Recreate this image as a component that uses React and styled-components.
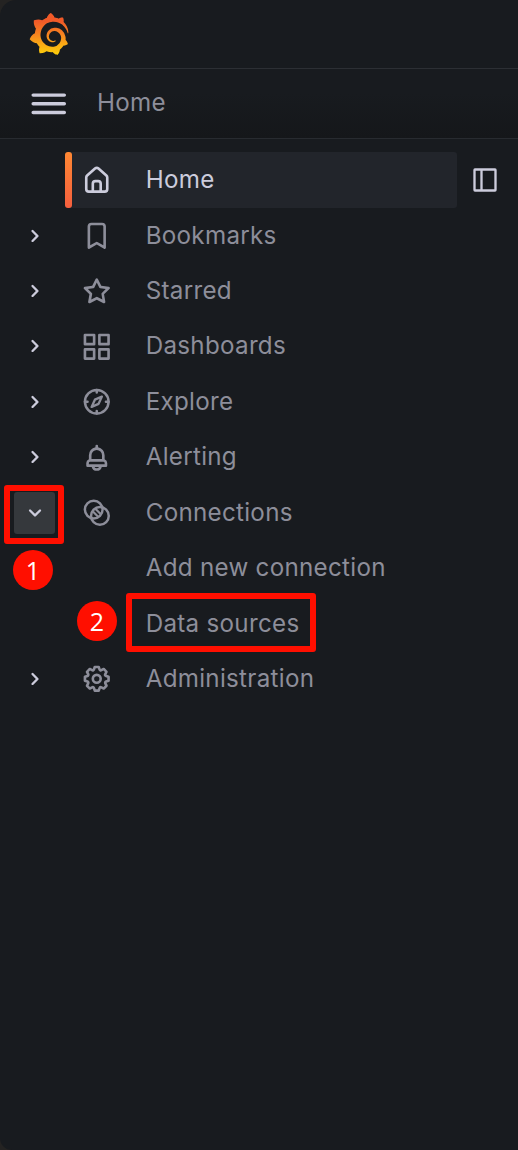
import React from 'react';
import styled, { createGlobalStyle, css } from 'styled-components';
import { SiGrafana } from 'react-icons/si';

const GlobalStyle = createGlobalStyle`
  *, *::before, *::after { box-sizing: border-box; }
  body {
    margin: 0;
    background: #242322;
    font-family: Inter, "Liberation Sans", sans-serif;
  }
  button { font: inherit; border: 0; padding: 0; background: none; color: inherit; }
`;

const Page = styled.div`
  position: relative;
  width: 518px;
  height: 1150px;
  overflow: hidden;
  background: #181b1f;
  border-radius: 16px 0 0 12px;
`;

const TopBar = styled.header`
  display: flex;
  align-items: center;
  height: 69px;
  padding-left: 28px;
  border-bottom: 1px solid #2c2f34;
`;

const Logo = styled(SiGrafana)`
  display: block;
  width: 42px;
  height: 42px;
  path { fill: url(#flame); }
`;

const CrumbBar = styled.div`
  display: flex;
  align-items: center;
  gap: 27.5px;
  height: 70px;
  padding-left: 28px;
  background: linear-gradient(to bottom, #181b1f 35%, #15171a 100%);
  border-bottom: 1px solid #282b30;
`;

const MenuButton = styled.button`
  display: flex;
  color: #ccccdc;
`;

const Crumb = styled.span`
  font-size: 24.2px;
  line-height: 36px;
  letter-spacing: 0.26px;
  padding-bottom: 2px;
  color: #8d8e9a;
`;

const Glyph = styled.svg`
  display: block;
  flex: none;
  width: ${(p) => p.$size}px;
  height: ${(p) => p.$size}px;
  fill: currentColor;
`;

const NavList = styled.ul`
  list-style: none;
  margin: 0;
  padding: 13.45px 0 0 14px;
`;

const NavRow = styled.li`
  display: flex;
  align-items: center;
  height: 55.45px;
`;

const Toggle = styled.button`
  display: flex;
  align-items: center;
  justify-content: center;
  flex: none;
  width: 41px;
  height: 42px;
  margin-right: 11px;
  border-radius: 3px;
  color: #ccccdc;
  background: ${(p) => (p.$open ? '#35383c' : 'transparent')};
`;

const NavLink = styled.a`
  position: relative;
  display: flex;
  align-items: center;
  gap: 32.8px;
  width: 391px;
  height: 56px;
  padding-left: 15.4px;
  border-radius: 3px;
  color: #8d8e9a;
  ${(p) =>
    p.$active &&
    css`
      color: #ccccdc;
      background: #22252b;
      &::before {
        content: '';
        position: absolute;
        left: -0.6px;
        top: 0;
        bottom: 0;
        width: 7px;
        border-radius: 3px;
        background: linear-gradient(#ff8833, #f55f3e);
      }
    `}
`;

const Label = styled.span`
  font-size: 24.2px;
  line-height: 36px;
  letter-spacing: 0.28px;
  white-space: nowrap;
`;

const IconGap = styled.span`
  flex: none;
  width: 31.5px;
`;

const DockButton = styled.button`
  display: flex;
  margin-left: 14px;
  color: #ccccdc;
`;

const Highlight = styled.div`
  position: absolute;
  left: ${(p) => p.$x}px;
  top: ${(p) => p.$y}px;
  width: ${(p) => p.$w}px;
  height: 59px;
  border: 6px solid #ff0f00;
  border-radius: 3px;
`;

const Step = styled.div`
  position: absolute;
  left: ${(p) => p.$x}px;
  top: ${(p) => p.$y}px;
  display: flex;
  align-items: center;
  justify-content: center;
  width: 40px;
  height: 40px;
  border-radius: 50%;
  background: #ff0f00;
  color: #fff;
  font: 25px/40px "Open Sans", "Noto Sans", sans-serif;
`;

const paths = {
  right: 'M14.83,11.29,10.59,7.05a1,1,0,0,0-1.42,0,1,1,0,0,0,0,1.41L12.71,12,9.17,15.54a1,1,0,0,0,0,1.41,1,1,0,0,0,.71.29,1,1,0,0,0,.71-.29l4.24-4.24A1,1,0,0,0,14.83,11.29Z',
  down: 'M17,9.17a1,1,0,0,0-1.41,0L12,12.71,8.46,9.17a1,1,0,0,0-1.41,0,1,1,0,0,0,0,1.42l4.24,4.24a1,1,0,0,0,1.42,0L17,10.59A1,1,0,0,0,17,9.17Z',
  bars: 'M3,8H21a1,1,0,0,0,0-2H3A1,1,0,0,0,3,8ZM21,11H3a1,1,0,0,0,0,2H21a1,1,0,0,0,0-2ZM21,16H3a1,1,0,0,0,0,2H21a1,1,0,0,0,0-2Z',
  home: 'M20,8h0L14,2.74a3,3,0,0,0-4,0L4,8a3,3,0,0,0-1,2.26V19a3,3,0,0,0,3,3H18a3,3,0,0,0,3-3V10.25A3,3,0,0,0,20,8ZM14,20H10V15a1,1,0,0,1,1-1h2a1,1,0,0,1,1,1Zm5-1a1,1,0,0,1-1,1H16V15a3,3,0,0,0-3-3H11a3,3,0,0,0-3,3v5H6a1,1,0,0,1-1-1V10.25a1,1,0,0,1,.34-.75l6-5.25a1,1,0,0,1,1.32,0l6,5.25a1,1,0,0,1,.34.75Z',
  bookmark: 'M16,2H8A3,3,0,0,0,5,5V21a1,1,0,0,0,.5.87,1,1,0,0,0,1,0L12,18.69l5.5,3.18A1,1,0,0,0,18,22a1,1,0,0,0,.5-.13A1,1,0,0,0,19,21V5A3,3,0,0,0,16,2Zm1,17.27-4.5-2.6a1,1,0,0,0-1,0L7,19.27V5A1,1,0,0,1,8,4h8a1,1,0,0,1,1,1Z',
  star: 'M22,9.67A1,1,0,0,0,21.14,9l-5.69-.83L12.9,3a1,1,0,0,0-1.8,0L8.55,8.16,2.86,9a1,1,0,0,0-.81.68,1,1,0,0,0,.25,1l4.13,4-1,5.68A1,1,0,0,0,6.9,21.44L12,18.77l5.1,2.67a.93.93,0,0,0,.46.12,1,1,0,0,0,.59-.19,1,1,0,0,0,.4-1l-1-5.68,4.13-4A1,1,0,0,0,22,9.67Zm-6.15,4a1,1,0,0,0-.29.88l.72,4.2-3.76-2a1.06,1.06,0,0,0-.94,0l-3.76,2,.72-4.2a1,1,0,0,0-.29-.88l-3-3,4.21-.61a1,1,0,0,0,.76-.55L12,5.7l1.88,3.82a1,1,0,0,0,.76.55l4.21.61Z',
  apps: 'M10,13H3a1,1,0,0,0-1,1v7a1,1,0,0,0,1,1h7a1,1,0,0,0,1-1V14A1,1,0,0,0,10,13ZM9,20H4V15H9ZM21,2H14a1,1,0,0,0-1,1v7a1,1,0,0,0,1,1h7a1,1,0,0,0,1-1V3A1,1,0,0,0,21,2ZM20,9H15V4h5Zm1,4H14a1,1,0,0,0-1,1v7a1,1,0,0,0,1,1h7a1,1,0,0,0,1-1V14A1,1,0,0,0,21,13Zm-1,7H15V15h5ZM10,2H3A1,1,0,0,0,2,3v7a1,1,0,0,0,1,1h7a1,1,0,0,0,1-1V3A1,1,0,0,0,10,2ZM9,9H4V4H9Z',
  bell: 'M18,13.18V10a6,6,0,0,0-5-5.91V3a1,1,0,0,0-2,0V4.09A6,6,0,0,0,6,10v3.18A3,3,0,0,0,4,16v2a1,1,0,0,0,1,1H8.14a4,4,0,0,0,7.72,0H19a1,1,0,0,0,1-1V16A3,3,0,0,0,18,13.18ZM8,10a4,4,0,0,1,8,0v3H8Zm4,10a2,2,0,0,1-1.72-1h3.44A2,2,0,0,1,12,20Zm6-3H6V16a1,1,0,0,1,1-1H17a1,1,0,0,1,1,1Z',
  cog: 'M21.32,9.55l-1.89-.63.89-1.78A1,1,0,0,0,20.13,6L18,3.87a1,1,0,0,0-1.15-.19l-1.78.89-.63-1.89A1,1,0,0,0,13.5,2h-3a1,1,0,0,0-.95.68L8.92,4.57,7.14,3.68A1,1,0,0,0,6,3.87L3.87,6a1,1,0,0,0-.19,1.15l.89,1.78-1.89.63A1,1,0,0,0,2,10.5v3a1,1,0,0,0,.68.95l1.89.63-.89,1.78A1,1,0,0,0,3.87,18L6,20.13a1,1,0,0,0,1.15.19l1.78-.89.63,1.89a1,1,0,0,0,.95.68h3a1,1,0,0,0,.95-.68l.63-1.89,1.78.89A1,1,0,0,0,18,20.13L20.13,18a1,1,0,0,0,.19-1.15l-.89-1.78,1.89-.63A1,1,0,0,0,22,13.5v-3A1,1,0,0,0,21.32,9.55ZM20,12.78l-1.2.4A2,2,0,0,0,17.64,16l.57,1.14-1.1,1.1L16,17.64a2,2,0,0,0-2.79,1.16l-.4,1.2H11.22l-.4-1.2A2,2,0,0,0,8,17.64l-1.14.57-1.1-1.1L6.36,16A2,2,0,0,0,5.2,13.18L4,12.78V11.22l1.2-.4A2,2,0,0,0,6.36,8L5.79,6.89l1.1-1.1L8,6.36A2,2,0,0,0,10.82,5.2l.4-1.2h1.56l.4,1.2A2,2,0,0,0,16,6.36l1.14-.57,1.1,1.1L17.64,8a2,2,0,0,0,1.16,2.79l1.2.4ZM12,8a4,4,0,1,0,4,4A4,4,0,0,0,12,8Zm0,6a2,2,0,1,1,2-2A2,2,0,0,1,12,14Z',
};

const strokes = {
  compass: (
    <g fill="none" stroke="currentColor" strokeWidth="1.9" strokeLinecap="round" strokeLinejoin="round">
      <circle cx="12" cy="12" r="9" />
      <path d="M12 3v2M12 19v2M3 12h2M19 12h2" />
      <path strokeWidth="1.8" d="M15.9 8.1 10.6 10.4 8.1 15.9 13.4 13.6Z" />
    </g>
  ),
  connections: (
    <g fill="none" stroke="currentColor" strokeWidth="1.9">
      <circle cx="9.7" cy="9.6" r="6.75" />
      <circle cx="14.4" cy="14.4" r="6.75" />
      <path strokeWidth="1.7" d="M10.9 8.9 15.1 13.1M8.9 10.9 13.1 15.1" />
    </g>
  ),
  dock: (
    <g fill="none" stroke="currentColor" strokeWidth="2">
      <rect x="3" y="3" width="18" height="18" rx="0.4" />
      <path d="M9 3v18" />
    </g>
  ),
};

function Icon({ name, size = 31.5 }) {
  return (
    <Glyph viewBox="0 0 24 24" $size={size} aria-hidden="true">
      {paths[name] ? <path d={paths[name]} /> : strokes[name]}
    </Glyph>
  );
}

const items = [
  { label: 'Home', icon: 'home', active: true },
  { label: 'Bookmarks', icon: 'bookmark', toggle: 'right' },
  { label: 'Starred', icon: 'star', toggle: 'right' },
  { label: 'Dashboards', icon: 'apps', toggle: 'right' },
  { label: 'Explore', icon: 'compass', toggle: 'right' },
  { label: 'Alerting', icon: 'bell', toggle: 'right' },
  { label: 'Connections', icon: 'connections', toggle: 'down' },
  { label: 'Add new connection' },
  { label: 'Data sources' },
  { label: 'Administration', icon: 'cog', toggle: 'right' },
];

function NavItem({ item }) {
  return (
    <NavRow>
      <Toggle as={item.toggle ? 'button' : 'span'} $open={item.toggle === 'down'}>
        {item.toggle && <Icon name={item.toggle} size={28} />}
      </Toggle>
      <NavLink $active={item.active}>
        {item.icon ? <Icon name={item.icon} /> : <IconGap />}
        <Label>{item.label}</Label>
      </NavLink>
      {item.active && (
        <DockButton aria-label="Dock menu">
          <Icon name="dock" size={28} />
        </DockButton>
      )}
    </NavRow>
  );
}

export default function App() {
  return (
    <Page>
      <GlobalStyle />
      <svg width="0" height="0" style={{ position: 'absolute' }} aria-hidden="true">
        <linearGradient id="flame" x1="0" y1="1" x2="0" y2="0">
          <stop offset="0" stopColor="#fcd00a" />
          <stop offset="0.22" stopColor="#fbb013" />
          <stop offset="0.5" stopColor="#f68220" />
          <stop offset="0.8" stopColor="#f05a28" />
          <stop offset="1" stopColor="#f05a28" />
        </linearGradient>
      </svg>
      <TopBar>
        <Logo />
      </TopBar>
      <CrumbBar>
        <MenuButton aria-label="Close menu">
          <Icon name="bars" size={41.5} />
        </MenuButton>
        <Crumb>Home</Crumb>
      </CrumbBar>
      <NavList>
        {items.map((item) => (
          <NavItem key={item.label} item={item} />
        ))}
      </NavList>
      <Highlight $x={4} $y={485} $w={60} />
      <Step $x={13} $y={550}>1</Step>
      <Highlight $x={126} $y={593} $w={190} />
      <Step $x={77} $y={601}>2</Step>
    </Page>
  );
}
